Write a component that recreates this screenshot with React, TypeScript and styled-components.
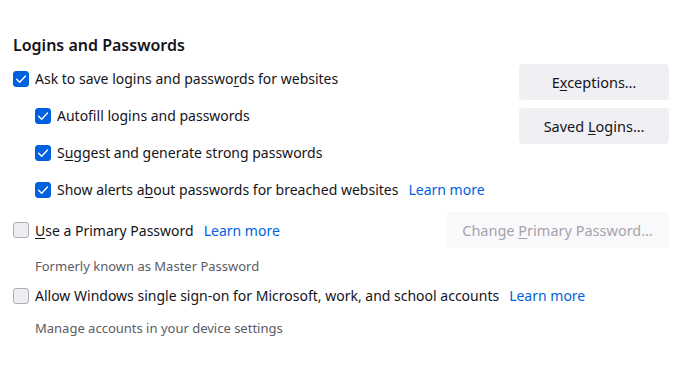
import React from 'react'
import styled, { createGlobalStyle } from 'styled-components'

const GlobalStyle = createGlobalStyle`
  body {
    margin: 0;
    background: #fff;
    font-family: 'Segoe UI', 'Noto Sans', 'Open Sans', sans-serif;
    color: #15141a;
  }
`

interface CheckProps {
  checked?: boolean
}

const Check: React.FC<CheckProps> = ({ checked }) => (
  <Box $checked={checked}>
    {checked && (
      <svg width="12" height="12" viewBox="0 0 12 12">
        <path d="M1.6 6.2 L4.7 9.2 L10.5 3" fill="none" stroke="#fff" strokeWidth="1.4" strokeLinecap="round" strokeLinejoin="round" />
      </svg>
    )}
  </Box>
)

const App: React.FC = () => {
  return (
    <>
      <GlobalStyle />
      <Section>
        <Heading>Logins and Passwords</Heading>
        <TopBlock>
          <Options>
            <Row>
              <Check checked />
              <span>Ask to save logins and passwo<Key>r</Key>ds for websites</span>
            </Row>
            <Row $nested>
              <Check checked />
              <span>Autof<Key>i</Key>ll logins and passwords</span>
            </Row>
            <Row $nested>
              <Check checked />
              <span>S<Key>u</Key>ggest and generate strong passwords</span>
            </Row>
            <Row $nested>
              <Check checked />
              <span>Show alerts a<Key>b</Key>out passwords for breached websites</span>
              <Link>Learn more</Link>
            </Row>
          </Options>
          <Buttons>
            <Button>E<Key>x</Key>ceptions…</Button>
            <Button>Saved <Key>L</Key>ogins…</Button>
          </Buttons>
        </TopBlock>
        <PrimaryBlock>
          <Row>
            <Check />
            <span><Key>U</Key>se a Primary Password</span>
            <Link>Learn more</Link>
          </Row>
          <Button disabled>Change <Key>P</Key>rimary Password…</Button>
        </PrimaryBlock>
        <Note $gap={8}>Formerly known as Master Password</Note>
        <Row $offset={1}>
          <Check />
          <span>Allow Windows single sign-on for Microsoft, work, and school accounts</span>
          <Link>Learn more</Link>
        </Row>
        <Note $gap={4}>Manage accounts in your device settings</Note>
      </Section>
    </>
  )
}

export default App

const Section = styled.section`
  padding: 33px 31px 0 13px;
  font-size: 14px;
`

const Heading = styled.h2`
  margin: 0 0 3px;
  font-size: 16px;
  font-weight: 600;
  line-height: 24px;
`

const TopBlock = styled.div`
  display: flex;
  justify-content: space-between;
  align-items: flex-start;
`

const Options = styled.div`
  display: flex;
  flex-direction: column;
`

const Row = styled.div<{ $nested?: boolean; $offset?: number }>`
  display: flex;
  align-items: center;
  height: 37px;
  margin-top: ${p => p.$offset ?? 0}px;
  padding-left: ${p => (p.$nested ? '22px' : '0')};
  white-space: nowrap;
`

const Box = styled.span<{ $checked?: boolean }>`
  display: inline-flex;
  align-items: center;
  justify-content: center;
  box-sizing: border-box;
  width: 16px;
  height: 16px;
  margin-right: 6px;
  border-radius: 3px;
  background: ${p => (p.$checked ? '#0061e0' : '#eeeef2')};
  border: 1px solid ${p => (p.$checked ? '#0061e0' : '#aeaeb6')};
  flex-shrink: 0;
`

const Key = styled.u`
  text-underline-offset: 2px;
`

const Link = styled.a`
  margin-left: 10px;
  color: #0061e0;
  cursor: pointer;
`

const Buttons = styled.div`
  display: flex;
  flex-direction: column;
  gap: 8px;
  margin-top: 4px;
`

const Button = styled.button`
  width: ${p => (p.disabled ? '223px' : '150px')};
  height: 36px;
  padding: 0 8px;
  border: none;
  border-radius: 4px;
  background: ${p => (p.disabled ? '#f9f9fb' : '#f0f0f4')};
  color: ${p => (p.disabled ? '#a4a4aa' : '#15141a')};
  font-family: inherit;
  font-size: 14.5px;
  cursor: ${p => (p.disabled ? 'default' : 'pointer')};
`

const PrimaryBlock = styled.div`
  display: flex;
  justify-content: space-between;
  align-items: center;
  height: 36px;
  margin-top: 4px;
`

const Note = styled.div<{ $gap: number }>`
  margin-top: ${p => p.$gap}px;
  padding-left: 22px;
  font-size: 13px;
  line-height: 20px;
  color: #5b5b66;
`
